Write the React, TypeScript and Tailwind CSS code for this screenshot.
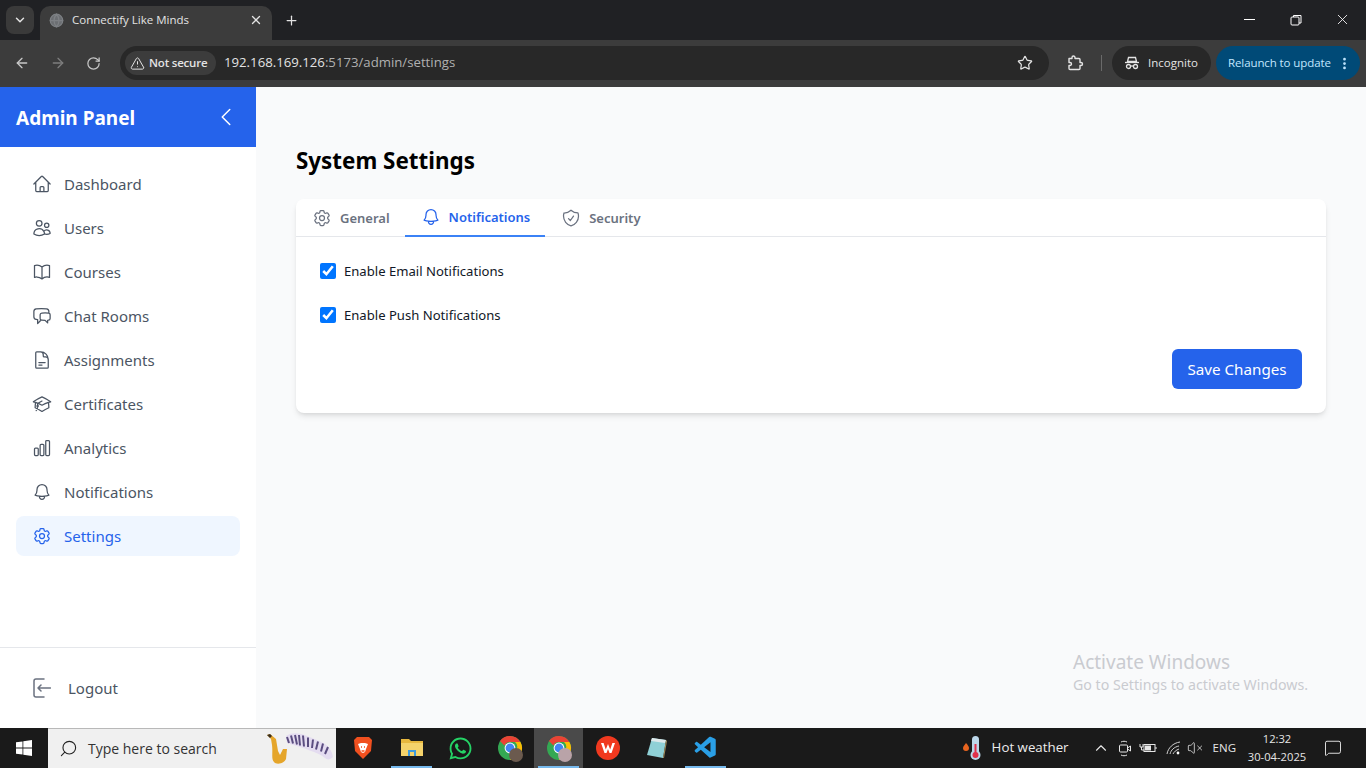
import React from 'react';
import { ArrowLeft, ArrowRight, RotateCw, Star, ChevronDown, X, Plus, Search, ChevronUp, TriangleAlert, EllipsisVertical, Globe, VolumeX, MessageSquare } from 'lucide-react';
import {
  HiOutlineHome,
  HiOutlineUsers,
  HiOutlineBookOpen,
  HiOutlineChatBubbleLeftRight,
  HiOutlineDocumentText,
  HiOutlineAcademicCap,
  HiOutlineChartBar,
  HiOutlineBell,
  HiOutlineCog6Tooth,
  HiOutlineShieldCheck,
  HiOutlineChevronLeft,
} from 'react-icons/hi2';
import { FaWhatsapp } from 'react-icons/fa';
import { VscVscode } from 'react-icons/vsc';

const navItems = [
  { label: 'Dashboard', icon: HiOutlineHome },
  { label: 'Users', icon: HiOutlineUsers },
  { label: 'Courses', icon: HiOutlineBookOpen },
  { label: 'Chat Rooms', icon: HiOutlineChatBubbleLeftRight },
  { label: 'Assignments', icon: HiOutlineDocumentText },
  { label: 'Certificates', icon: HiOutlineAcademicCap },
  { label: 'Analytics', icon: HiOutlineChartBar },
  { label: 'Notifications', icon: HiOutlineBell },
  { label: 'Settings', icon: HiOutlineCog6Tooth, active: true },
];

const Incognito = () => (
  <svg width="16" height="16" viewBox="0 0 16 16" fill="none" stroke="#e3e3e3" strokeWidth="1.3">
    <path d="M4.5 2.5h7l1 4h-9z" />
    <path d="M1 7.5h14" />
    <circle cx="4.5" cy="11.5" r="2" />
    <circle cx="11.5" cy="11.5" r="2" />
    <path d="M6.5 11h3" />
  </svg>
);

const ExtensionIcon = () => (
  <svg width="16" height="16" viewBox="0 0 16 16" fill="none" stroke="#e3e3e3" strokeWidth="1.4" strokeLinejoin="round">
    <path d="M1 3.5h3v-1a1.5 1.5 0 0 1 3 0v1h4a1 1 0 0 1 1 1v3h1a1.5 1.5 0 0 1 0 3h-1v3a1 1 0 0 1-1 1H2a1 1 0 0 1-1-1v-3h1a1.5 1.5 0 0 0 0-3H1z" />
  </svg>
);

const ChromeBar = () => (
  <div className="h-[87px] shrink-0 flex flex-col bg-[#202124] font-['Open_Sans',sans-serif]">
    <div className="h-[40px] flex items-end">
      <div className="w-[28px] h-[28px] ml-[6px] mb-[6px] rounded-lg bg-[#3a3a3a] flex items-center justify-center text-[#e3e3e3]">
        <ChevronDown size={14} strokeWidth={2.5} />
      </div>
      <div className="w-[232px] h-[34px] ml-[6px] rounded-t-[10px] bg-[#3c3c3c] flex items-center pl-[9px] pr-[9px] pb-[6px]">
        <Globe size={15} className="text-[#7d8084]" fill="#6b6e72" />
        <span className="ml-[8px] text-[11.5px] text-[#e3e3e3] flex-1">Connectify Like Minds</span>
        <X size={14} strokeWidth={2.2} className="text-[#e3e3e3]" />
      </div>
      <Plus size={15} strokeWidth={2} className="ml-[12px] mb-[12px] text-[#e3e3e3]" />
      <div className="flex-1" />
      <div className="flex items-center h-[40px] text-white pb-[1px]">
        <div className="w-[11px] h-[1px] bg-white mr-[35px]" />
        <svg width="12" height="12" viewBox="0 0 12 12" fill="none" stroke="#fff" strokeWidth="1" className="mr-[32px]">
          <rect x="1" y="3" width="8" height="8" rx="1" />
          <path d="M3.5 3V1.5h7.5V9H9" />
        </svg>
        <X size={17} strokeWidth={1.2} className="mr-[15px]" />
      </div>
    </div>
    <div className="h-[47px] bg-[#3c3c3c] flex items-center pb-[1px]">
      <ArrowLeft size={16} strokeWidth={2} className="ml-[14px] text-[#c7c7c7]" />
      <ArrowRight size={16} strokeWidth={2} className="ml-[20px] text-[#7d7d7d]" />
      <RotateCw size={15} strokeWidth={2} className="ml-[20px] text-[#c7c7c7]" />
      <div className="ml-[19px] w-[929px] h-[34px] rounded-full bg-[#282828] flex items-center pl-[5px] pr-[16px]">
        <div className="h-[24px] w-[91px] rounded-full bg-[#3c3c3c] flex items-center pl-[5px]">
          <TriangleAlert size={15} strokeWidth={1.6} className="text-[#e3e3e3]" />
          <span className="ml-[4px] text-[11.5px] font-semibold text-[#e3e3e3] tracking-[-0.2px]">Not secure</span>
        </div>
        <span className="ml-[8px] text-[13.2px] text-[#e3e3e3] flex-1">
          192.168.169.126<span className="text-[#b0b0b0]">:5173/admin/settings</span>
        </span>
        <Star size={16} strokeWidth={1.8} className="text-[#e3e3e3]" />
      </div>
      <div className="ml-[19px]">
        <ExtensionIcon />
      </div>
      <div className="ml-[17px] w-[1px] h-[16px] bg-[#6a6a6a]" />
      <div className="ml-[10px] w-[99px] h-[34px] rounded-full bg-[#282828] flex items-center pl-[12px]">
        <Incognito />
        <span className="ml-[8px] text-[11.5px] text-[#e3e3e3]">Incognito</span>
      </div>
      <div className="ml-[5px] w-[144px] h-[34px] rounded-full bg-[#004a77] flex items-center pl-[12px]">
        <span className="text-[11.5px] text-[#c2e7ff] whitespace-nowrap tracking-[-0.1px]">Relaunch to update</span>
        <EllipsisVertical size={15} strokeWidth={2.4} className="ml-[6px] text-[#c2e7ff]" />
      </div>
    </div>
  </div>
);

const Sidebar = () => (
  <aside className="w-[256px] shrink-0 bg-white flex flex-col">
    <div className="h-[60px] bg-[#2563eb] flex items-center justify-between pl-4 pr-[18px]">
      <span className="text-[19px] font-bold text-white pt-[2px]">Admin Panel</span>
      <HiOutlineChevronLeft size={24} className="text-white" />
    </div>
    <nav className="flex-1 pt-[17px] px-4 flex flex-col gap-1">
      {navItems.map(({ label, icon: Icon, active }) => (
        <a
          key={label}
          href="#"
          className={`h-10 px-4 rounded-lg flex items-center gap-3 ${active ? 'bg-[#eff6ff] text-[#2563eb]' : 'text-[#4b5563]'}`}
        >
          <Icon size={20} />
          <span className="text-[15px]">{label}</span>
        </a>
      ))}
    </nav>
    <div className="h-[81px] border-t border-[#e5e7eb] flex items-center pl-[33px]">
      <svg width="18" height="20" viewBox="0 0 18 20" fill="none" stroke="#6b7280" strokeWidth="1.5" strokeLinecap="round" strokeLinejoin="round">
        <path d="M11 1H3a2 2 0 0 0-2 2v14a2 2 0 0 0 2 2h8" />
        <path d="M17.5 10H5M8 7l-3 3 3 3" />
      </svg>
      <span className="ml-[17px] text-[15px] text-[#4b5563]">Logout</span>
    </div>
  </aside>
);

const tabs = [
  { label: 'General', icon: HiOutlineCog6Tooth },
  { label: 'Notifications', icon: HiOutlineBell, active: true },
  { label: 'Security', icon: HiOutlineShieldCheck },
];

const Settings = () => (
  <main className="relative flex-1 bg-[#f9fafb] px-10 pt-[58px]">
    <h1 className="text-[22.4px] leading-8 font-bold text-black mb-[22px]">System Settings</h1>
    <div className="bg-white rounded-lg shadow-md">
      <div className="flex h-[38px] border-b border-[#e5e7eb]">
        {tabs.map(({ label, icon: Icon, active }) => (
          <div
            key={label}
            className={`h-[38px] pl-4 pr-[15px] flex items-center gap-2 text-[13px] font-semibold ${active ? 'text-[#2563eb] border-b-2 border-[#3b82f6]' : 'text-[#6b7280]'}`}
          >
            <Icon size={20} />
            <span className="pt-[2px]">{label}</span>
          </div>
        ))}
      </div>
      <div className="p-6">
        <label className="flex items-center h-5 gap-2 text-[13.1px] text-[#111827]">
          <input type="checkbox" defaultChecked className="w-4 h-4" />
          <span className="pt-[2px]">Enable Email Notifications</span>
        </label>
        <label className="flex items-center h-5 mt-6 gap-2 text-[13.1px] text-[#111827]">
          <input type="checkbox" defaultChecked className="w-4 h-4" />
          <span className="pt-[2px]">Enable Push Notifications</span>
        </label>
        <div className="flex justify-end mt-6">
          <button className="h-10 w-[130px] rounded-md bg-[#2563eb] text-white text-[15.2px]">Save Changes</button>
        </div>
      </div>
    </div>
    {/* Windows watermark */}
    <div className="absolute left-[817px] top-[562px] text-[#c9cbd0] pointer-events-none">
      <div className="text-[19px] leading-[26px]">Activate Windows</div>
      <div className="text-[14.2px] leading-[20px]">Go to Settings to activate Windows.</div>
    </div>
  </main>
);

const TaskIcon: React.FC<{ children: React.ReactNode; running?: boolean; active?: boolean }> = ({ children, running, active }) => (
  <div className={`relative w-[49px] h-[40px] flex items-center justify-center ${active ? 'bg-[#4a4a4a]' : ''}`}>
    {children}
    {running && <div className="absolute bottom-0 left-[4px] right-[4px] h-[2px] bg-[#76b9ed]" />}
  </div>
);

const ChromeLogo: React.FC<{ badge: string }> = ({ badge }) => (
  <svg width="24" height="24" viewBox="0 0 24 24" className="overflow-visible">
    <circle cx="12" cy="12" r="12" fill="#34a853" />
    <path d="M12 0a12 12 0 0 1 10.4 6H12a6 6 0 0 0-5.6 3.6L2 5a12 12 0 0 1 10-5z" fill="#ea4335" />
    <path d="M22.4 6A12 12 0 0 1 12 24l5-8.5A6 6 0 0 0 17 6z" fill="#fbbc04" />
    <circle cx="12" cy="12" r="5.4" fill="#fff" />
    <circle cx="12" cy="12" r="4.4" fill="#4285f4" />
    <circle cx="18" cy="19" r="7" fill={badge} />
  </svg>
);

const Taskbar = () => (
  <div className="h-[40px] shrink-0 bg-[#1a1a1a] flex items-center font-['Open_Sans',sans-serif]">
    <div className="w-[48px] flex justify-center">
      <svg width="16" height="16" viewBox="0 0 16 16" fill="#fff">
        <path d="M0 2.3l6.5-.9v6.2H0zM7.3 1.3L16 0v7.6H7.3zM0 8.4h6.5v6.2L0 13.7zM7.3 8.4H16V16l-8.7-1.2z" />
      </svg>
    </div>
    <div className="w-[288px] h-[40px] bg-[#f0f0f0] border-t border-[#b8b8b8] flex items-center pl-[11px] relative">
      <Search size={19} strokeWidth={1.4} className="text-[#222] -scale-x-100" />
      <span className="ml-[10px] text-[14px] text-[#333]">Type here to search</span>
      {/* sax and piano search doodle */}
      <svg width="70" height="36" viewBox="0 0 70 36" className="absolute right-0 top-[2px]">
        <path d="M20 5c6-4 14-3 21 0 7 3 13 5 18 8 4 3 7 7 8 13-3 3-6 3-8 1-6-5-14-7-22-10-5-2-11-3-16-5z" fill="#e4dcf0" />
        <path d="M21 6l2 6M25 4.500l2 8M29 4l2 9.500M33 4l1 10.500M37 4.500l1 11M42 6.500l0 9.500M47 8.500l-1 8.500M52 10.500l-2 8M57 12.500l-2 8M62 16l-3 7" stroke="#5b4d80" strokeWidth="2" />
        <path d="M1 4l3-1 6 5 2 12 2 4 3-6h4l-1 10c-2 5-10 6-12 3-3-3-1-9-2-17L5 8z" fill="#e5a52a" />
        <path d="M1 4l3-1 2 2-2 2z" fill="#3a2f20" />
      </svg>
    </div>
    <div className="w-[2px]" />
    <TaskIcon>
      <svg width="20" height="24" viewBox="0 0 20 24">
        <path d="M4 1h12l3 3-1 11-8 8-8-8L1 4z" fill="#f1501f" />
        <path d="M5 8l3-1h4l3 1-2 5-1 3-2 1-2-1-1-3z" fill="#fff" />
        <path d="M8 11h1M11 11h1M8.5 15h3" stroke="#f1501f" strokeWidth="1.4" />
      </svg>
    </TaskIcon>
    <TaskIcon running>
      <svg width="22" height="20" viewBox="0 0 22 20">
        <path d="M0 1h8l2 2h12v15H0z" fill="#e8b83e" />
        <path d="M0 5h22v13H0z" fill="#f5d36b" />
        <path d="M7 12h8v6H7z" fill="#3f9bdc" />
        <path d="M9 14h4v4H9z" fill="#f5d36b" />
      </svg>
    </TaskIcon>
    <TaskIcon>
      <FaWhatsapp size={25} className="text-[#25d366]" />
    </TaskIcon>
    <TaskIcon>
      <ChromeLogo badge="#6b5a4e" />
    </TaskIcon>
    <TaskIcon running active>
      <ChromeLogo badge="#b9a3a8" />
    </TaskIcon>
    <TaskIcon>
      <svg width="24" height="24" viewBox="0 0 24 24">
        <circle cx="12" cy="12" r="12" fill="#f0391f" />
        <path d="M5 7h2.6l2.2 6.5L12 8l2.2 5.500L16.400 7H19l-3.500 10h-2L12 13l-1.500 4h-2z" fill="#fff" />
      </svg>
    </TaskIcon>
    <TaskIcon>
      <svg width="22" height="24" viewBox="0 0 22 24">
        <path d="M6 2l14 2-3 18-16-3z" fill="#8fd0d6" />
        <path d="M6 2l14 2-1 3-14-2z" fill="#dfe8ea" />
        <path d="M17 22l3-18 1 1-3 17z" fill="#a08a5a" />
      </svg>
    </TaskIcon>
    <TaskIcon running>
      <VscVscode size={26} className="text-[#2a9fe6]" />
    </TaskIcon>
    <div className="flex-1" />
    <div className="flex items-center text-white">
      <svg width="22" height="26" viewBox="0 0 22 26">
        <path d="M4 8c2 2 3 4 3 5a3 3 0 0 1-6 0c0-2 2-3 3-5z" fill="#e8641f" />
        <rect x="10" y="1" width="7" height="18" rx="3.5" fill="#bcd7ea" />
        <circle cx="13.500" cy="20" r="5" fill="#bcd7ea" />
        <circle cx="13.500" cy="20" r="3" fill="#e0304a" />
        <rect x="12.500" y="9" width="2" height="10" fill="#e0304a" />
      </svg>
      <span className="ml-[8px] text-[13.3px] w-[100px] text-[#ececec]">Hot weather</span>
      <ChevronUp size={18} strokeWidth={1.5} className="text-[#e6e6e6]" />
      <svg width="14" height="18" viewBox="0 0 14 18" fill="none" stroke="#e6e6e6" strokeWidth="1" className="ml-[8px]">
        <rect x="1.500" y="6" width="8" height="7" rx="1" />
        <path d="M9.500 9l3-2v5l-3-2M3 3c2-1 4-1 6 0M3 16c2 1 4 1 6 0" />
      </svg>
      <svg width="18" height="12" viewBox="0 0 18 12" fill="none" stroke="#e6e6e6" strokeWidth="1" className="ml-[7px]">
        <rect x="5" y="2.500" width="11" height="7" />
        <rect x="6.500" y="4" width="5" height="4" fill="#e6e6e6" />
        <path d="M17 5v2M1 2v3h3V2M2.500 5v3h3" />
      </svg>
      <svg width="15" height="15" viewBox="0 0 15 15" fill="none" stroke="#d0d0d0" strokeWidth="1" className="ml-[9px]">
        <path d="M1 13C2 7 7 2 14 1M4 13c1-4 4-7 9-8M7 13c1-2 3-4 6-5" />
        <circle cx="12" cy="12" r="1.400" fill="#fff" stroke="none" />
      </svg>
      <VolumeX size={16} strokeWidth={1.2} className="ml-[6px] text-[#e6e6e6]" />
      <span className="ml-[10px] text-[11.5px] text-[#e6e6e6]">ENG</span>
      <div className="ml-[11px] w-[60px] text-center text-[11.2px] leading-[18px] text-[#e6e6e6]">
        <div>12:32</div>
        <div className="whitespace-nowrap">30-04-2025</div>
      </div>
      <MessageSquare size={18} strokeWidth={1.2} className="ml-[17px] mr-[24px] text-[#f0f0f0]" />
    </div>
  </div>
);

export default function App() {
  return (
    <div className="w-[1366px] h-[768px] overflow-hidden flex flex-col font-['Noto_Sans',sans-serif]">
      <ChromeBar />
      <div className="flex-1 flex min-h-0">
        <Sidebar />
        <Settings />
      </div>
      <Taskbar />
    </div>
  );
}
